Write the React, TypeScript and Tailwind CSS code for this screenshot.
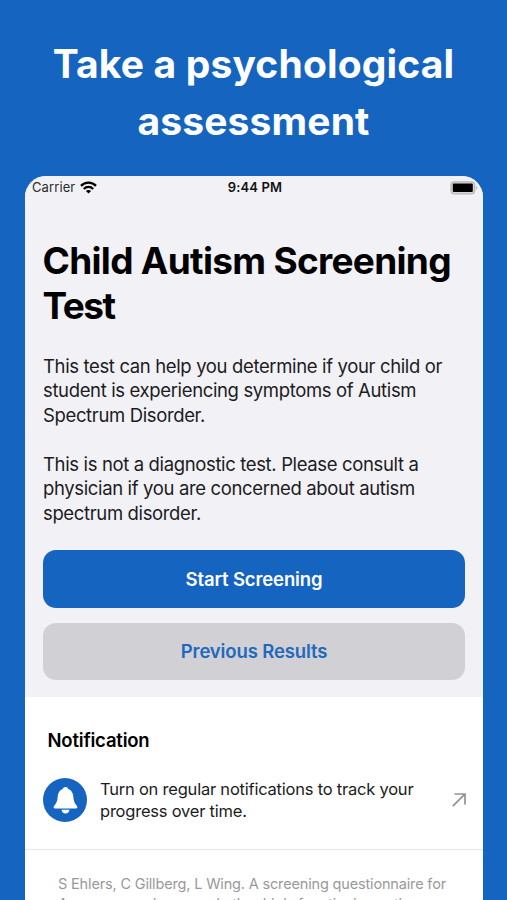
import type { ReactNode } from 'react'

// ─── Status bar ───────────────────────────────────────────────

function WifiIcon() {
  return (
    <svg className="ml-[5px] h-[13px] w-[17px]" viewBox="0 0 17 13" fill="none" aria-hidden="true">
      <path d="M1 4.9C5.1 .6 11.9 .6 16 4.9" stroke="#000" strokeWidth="2.3" />
      <path d="M3.8 7.9C6.4 5.2 10.6 5.2 13.2 7.9" stroke="#000" strokeWidth="2.1" />
      <path d="M8.5 12.6L5.9 10C7.3 8.6 9.7 8.6 11.1 10Z" fill="#000" />
    </svg>
  )
}

function BatteryIcon() {
  return (
    <svg className="h-[14px] w-[28px]" viewBox="0 0 28 14" fill="none" aria-hidden="true">
      <rect x="1" y="0.8" width="23.6" height="12" rx="3" fill="#d8d7db" stroke="#b9b8bc" strokeWidth="1.3" />
      <rect x="2.8" y="2.6" width="20" height="8.4" rx="0.9" fill="#000" />
      <path d="M25.8 4.8C27.6 5.4 27.6 8.2 25.8 8.8Z" fill="#b9b8bc" />
    </svg>
  )
}

function StatusBar() {
  return (
    <div className="grid h-[23px] grid-cols-3 items-center pl-[7px] pr-[5px] text-[13px] text-[#2b2b2d]">
      <div className="flex items-center">
        <span className="tracking-[0.1px]">Carrier</span>
        <WifiIcon />
      </div>
      <span className="text-center font-semibold tracking-[0.15px] text-[#111]">9:44 PM</span>
      <div className="flex justify-end">
        <BatteryIcon />
      </div>
    </div>
  )
}

// ─── Icons ────────────────────────────────────────────────────

function BellBadge() {
  return (
    <div className="flex size-[44px] shrink-0 items-center justify-center rounded-full bg-[#1565c0]">
      <svg className="h-[28px] w-[25px]" viewBox="0 0 25 28" fill="#fff" aria-hidden="true">
        <path d="M12.5 .9C10.9 .9 10 1.8 9.7 3.1C6.8 4.2 5 6.7 4.7 10.2C4.4 14.6 3.7 16.9 1.6 19.3C.1 20.9 .3 22.5 2.2 22.5H22.8C24.7 22.5 24.9 20.9 23.4 19.3C21.3 16.9 20.6 14.6 20.3 10.2C20 6.7 18.2 4.2 15.3 3.1C15 1.8 14.1 .9 12.5 .9Z" />
        <path d="M8.5 23.8H16.5C16.2 26.2 14.8 27.5 12.5 27.5C10.2 27.5 8.8 26.2 8.5 23.8Z" />
      </svg>
    </div>
  )
}

function ArrowIcon() {
  return (
    <svg className="size-[14px] shrink-0" viewBox="0 0 14 14" fill="none" stroke="#929292" strokeWidth="1.7" aria-hidden="true">
      <path d="M.8 13.2L12.8 1.2M2.4 1H13V11.6" />
    </svg>
  )
}

// ─── Buttons ──────────────────────────────────────────────────

function ActionButton({ className, children }: { className: string; children: ReactNode }) {
  return (
    <button
      type="button"
      className={`flex w-full items-center justify-center rounded-[13px] pt-[1px] text-[18.5px] font-semibold tracking-[-0.13px] ${className}`}
    >
      {children}
    </button>
  )
}

export default function App() {
  return (
    <main className="flex h-[900px] w-[507px] flex-col overflow-hidden bg-[#1565c0] font-['Inter','Liberation_Sans',sans-serif]">
      <h1 className="h-[176px] shrink-0 whitespace-nowrap pt-[35px] text-center text-[39px] font-bold leading-[57px] tracking-[0.15px] text-white">
        Take a psychological
        <br />
        assessment
      </h1>

      <div className="ml-[25px] flex w-[458px] grow flex-col overflow-hidden rounded-t-[21px] bg-white">
        <section className="h-[521px] shrink-0 bg-[#f2f1f6]">
          <StatusBar />
          <div className="whitespace-nowrap px-[18px] pt-[39px]">
            <h2 className="-ml-[0.5px] text-[37px] font-bold leading-[45px] tracking-[-0.7px] text-black">
              Child Autism Screening
              <br />
              <span className="tracking-[-1.5px]">Test</span>
            </h2>
            <div className="mt-[26px] flex flex-col gap-[24.5px] text-[18.5px] leading-[24.4px] tracking-[-0.36px] text-[#1c1c1e]">
              <p>
                This test can help you determine if your child or
                <br />
                student is experiencing symptoms of Autism
                <br />
                Spectrum Disorder.
              </p>
              <p>
                This is not a diagnostic test. Please consult a
                <br />
                physician if you are concerned about autism
                <br />
                spectrum disorder.
              </p>
            </div>
            <div className="mt-[25px] flex flex-col gap-[15px]">
              <ActionButton className="h-[58px] bg-[#1565c0] text-white">Start Screening</ActionButton>
              <ActionButton className="h-[57px] bg-[#d1d0d5] text-[#2169bd]">Previous Results</ActionButton>
            </div>
          </div>
        </section>

        <section className="h-[153px] shrink-0 border-b border-[#e6e6e8] pl-[18px] pr-[17px] pt-[31px]">
          <h3 className="pl-[4.5px] text-[18.5px] font-semibold leading-[24px] tracking-[-0.2px] text-black">
            Notification
          </h3>
          <div className="mt-[26px] flex items-center whitespace-nowrap">
            <BellBadge />
            <p className="-mt-px ml-[13px] grow text-[16.5px] leading-[22px] tracking-[-0.22px] text-[#1c1c1e]">
              Turn on regular notifications to track your
              <br />
              progress over time.
            </p>
            <ArrowIcon />
          </div>
        </section>

        <p className="whitespace-nowrap pl-[33px] pt-[24px] text-[14.5px] leading-[20px] tracking-[-0.16px] text-[#999]">
          S Ehlers, C Gillberg, L Wing. A screening questionnaire for
          <br />
          Asperger syndrome and other high-functioning autism
        </p>
      </div>
    </main>
  )
}
